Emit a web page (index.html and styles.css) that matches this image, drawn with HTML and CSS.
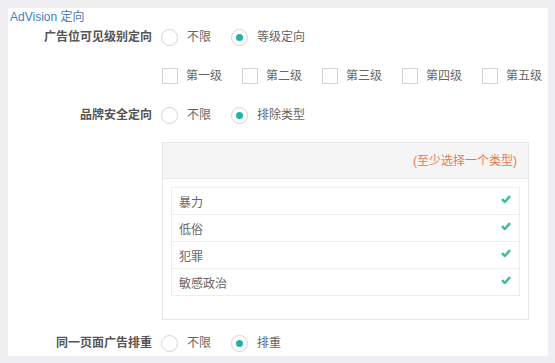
FILE: index.html
```html
<!DOCTYPE html>
<html lang="zh-CN">
<head>
    <meta charset="UTF-8">
    <title>AdVision 定向</title>
    <link rel="stylesheet" href="styles.css">
</head>
<body>
    <div class="panel">
        <h2 class="title">AdVision 定向</h2>

        <div class="row row-first">
            <div class="label">广告位可见级别定向</div>
            <div class="field">
                <span class="radio"></span><span class="opt">不限</span>
                <span class="radio checked"></span><span class="opt">等级定向</span>
            </div>
        </div>

        <div class="row">
            <div class="label"></div>
            <div class="field checks">
                <span class="check"></span><span class="opt">第一级</span>
                <span class="check"></span><span class="opt">第二级</span>
                <span class="check"></span><span class="opt">第三级</span>
                <span class="check"></span><span class="opt">第四级</span>
                <span class="check"></span><span class="opt">第五级</span>
            </div>
        </div>

        <div class="row">
            <div class="label">品牌安全定向</div>
            <div class="field">
                <span class="radio"></span><span class="opt">不限</span>
                <span class="radio checked"></span><span class="opt">排除类型</span>
            </div>
        </div>

        <div class="row row-box">
            <div class="label"></div>
            <div class="type-box">
                <div class="type-head">(至少选择一个类型)</div>
                <div class="type-body">
                    <ul class="type-list">
                        <li>暴力<svg class="tick" viewBox="0 0 10 8"><path d="M1 4.2 L3.8 7 L9 1.2"/></svg></li>
                        <li>低俗<svg class="tick" viewBox="0 0 10 8"><path d="M1 4.2 L3.8 7 L9 1.2"/></svg></li>
                        <li>犯罪<svg class="tick" viewBox="0 0 10 8"><path d="M1 4.2 L3.8 7 L9 1.2"/></svg></li>
                        <li>敏感政治<svg class="tick" viewBox="0 0 10 8"><path d="M1 4.2 L3.8 7 L9 1.2"/></svg></li>
                    </ul>
                </div>
            </div>
        </div>

        <div class="row row-last">
            <div class="label">同一页面广告排重</div>
            <div class="field">
                <span class="radio"></span><span class="opt">不限</span>
                <span class="radio checked"></span><span class="opt">排重</span>
            </div>
        </div>
    </div>
</body>
</html>
```

FILE: styles.css
```css
body { margin: 0; background: #efeff2; font-family: "Liberation Sans", "Noto Sans CJK SC", sans-serif; font-size: 12px; color: #666; }
.panel { margin: 8px 7px 7px 8px; background: #fff; padding: 0 0 2px 2px; height: 348px; box-sizing: border-box; }
.title { margin: 0 0 1px; padding-top: 1px; font-size: 12px; font-weight: normal; line-height: 16px; color: #4a7bb7; }

.row { display: flex; align-items: center; margin-top: 17px; }
.row-first { margin-top: 0; }
.row-box { margin-top: 16px; align-items: flex-start; }
.row-last { margin-top: 12px; }
.label { width: 142px; margin-right: 9px; text-align: right; font-weight: bold; color: #555; line-height: 22px; flex-shrink: 0; }
.field { display: flex; align-items: center; height: 22px; flex-shrink: 0; white-space: nowrap; }
.opt { line-height: 22px; margin-right: 20px; }

.radio { width: 15px; height: 15px; border: 1px solid #d4d4d4; border-radius: 50%; margin-right: 9px; position: relative; }
.radio.checked::after { content: ""; position: absolute; left: 4px; top: 4px; width: 7px; height: 7px; border-radius: 50%; background: #1fb3ab; }

.checks { margin-left: 1px; }
.check { width: 14px; height: 14px; border: 1px solid #d4d4d4; margin-right: 8px; }
.checks .opt { margin-right: 20px; }
.checks .opt:last-child { margin-right: 0; }

.type-box { width: 367px; height: 178px; margin-left: 1px; border: 1px solid #e6e6e6; box-sizing: border-box; }
.type-head { height: 36px; background: #f5f5f5; border-bottom: 1px solid #ebebeb; box-sizing: border-box; text-align: right; padding-right: 11px; line-height: 37px; color: #ef7550; }
.type-body { padding: 8px 8px 0 8px; }
.type-list { list-style: none; margin: 0; padding: 0; border: 1px solid #eee; border-bottom: none; }
.type-list li { display: flex; justify-content: space-between; align-items: center; height: 26px; border-bottom: 1px solid #eee; padding: 0 8px 0 7px; }
.tick { width: 10px; height: 8px; margin-top: -4px; fill: none; stroke: #3fbf8c; stroke-width: 2.5; }
```
